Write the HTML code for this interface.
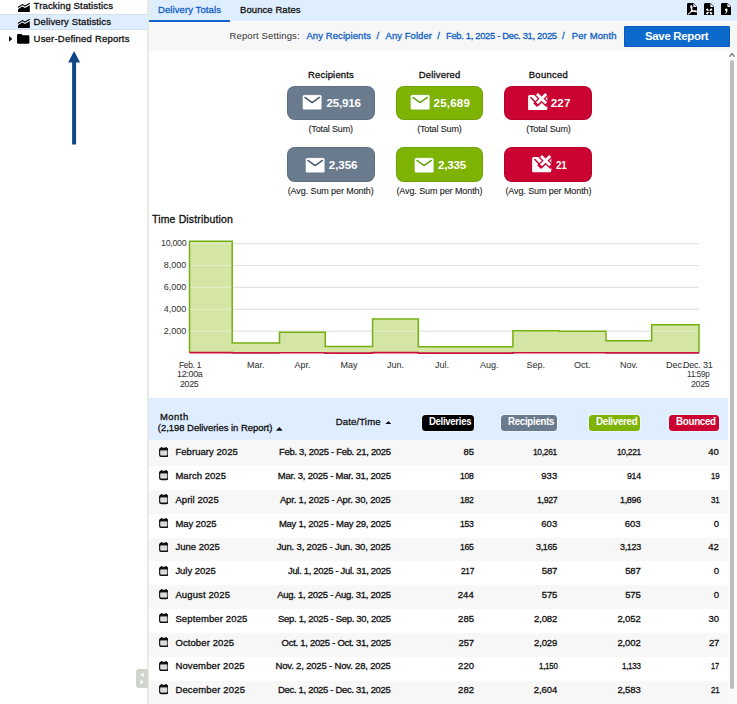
<!DOCTYPE html>
<html lang="en"><head><meta charset="utf-8"><title>Delivery Statistics</title>
<style>
html,body{margin:0;padding:0;background:#fff;}
body{width:737px;height:704px;position:relative;overflow:hidden;font-family:"Liberation Sans", sans-serif;}
.abs{position:absolute;display:block;}
.t{position:absolute;white-space:pre;font-family:"Liberation Sans", sans-serif;}
</style></head><body>

<div class="abs" style="left:0;top:0;width:148px;height:704px;background:#fff"></div>
<div class="abs" style="left:147.1px;top:0;width:1.5px;height:704px;background:#e9e9e5"></div>
<div class="abs" style="left:0;top:13.8px;width:147.5px;height:16.5px;background:#dfeeff;border-top:1px solid #d6e0ec;border-bottom:1px solid #d6e0ec;box-sizing:border-box"></div>
<svg class="abs" style="left:17.8px;top:3px" width="11.8" height="9" viewBox="0 0 11.8 9"><path d="M0 9 V6.2 L4.2 3.6 L7 5 L11.8 2.2 V9 Z" fill="#000"/><path d="M0.3 4.2 L4.2 1.6 L7 3 L11.4 0.5" fill="none" stroke="#000" stroke-width="1.1" stroke-linecap="round" stroke-linejoin="round"/></svg><svg class="abs" style="left:17.8px;top:19.3px" width="11.8" height="9" viewBox="0 0 11.8 9"><path d="M0 9 V6.2 L4.2 3.6 L7 5 L11.8 2.2 V9 Z" fill="#000"/><path d="M0.3 4.2 L4.2 1.6 L7 3 L11.4 0.5" fill="none" stroke="#000" stroke-width="1.1" stroke-linecap="round" stroke-linejoin="round"/></svg>
<svg class="abs" style="left:17.4px;top:34px" width="12.4" height="9.8" viewBox="0 0 12.4 9.8"><path d="M1.2 0 H4.4 L5.8 1.3 H11.2 Q12.4 1.3 12.4 2.5 V8.6 Q12.4 9.8 11.2 9.8 H1.2 Q0 9.8 0 8.6 V1.2 Q0 0 1.2 0 Z" fill="#000"/></svg>
<svg class="abs" style="left:8.6px;top:36.1px" width="3.4" height="5.8" viewBox="0 0 3.4 5.8"><path d="M0 0 L3.4 2.9 L0 5.8 Z" fill="#111"/></svg>
<svg class="abs" style="left:66px;top:49px" width="16" height="97" viewBox="0 0 16 97"><path d="M8.1 2 L14.1 13.6 H10.1 V95.4 H6.1 V13.6 H2.1 Z" fill="#0d4685"/></svg>
<div class="abs" style="left:148.6px;top:0;width:588.4px;height:21.4px;background:#dfeeff"></div>
<div class="abs" style="left:148.6px;top:19.6px;width:81.8px;height:2px;background:#1565c8"></div>
<div class="abs" style="left:148.6px;top:21.5px;width:588.4px;height:29px;background:#f7f7f7"></div>
<svg class="abs" style="left:686.9px;top:2.7px" width="10.4" height="12.6" viewBox="0 0 10.4 12.6"><path d="M1.4 0 H6.4 L10.4 4 V11.2 Q10.4 12.6 9 12.6 H1.4 Q0 12.6 0 11.2 V1.4 Q0 0 1.4 0 Z" fill="#000"/><path d="M6.3 0.5 V3.3 Q6.3 4.1 7.1 4.1 H9.9 Z" fill="#eef3fb"/><path d="M1.4 11 C3.6 9.6 5.2 6.4 4.9 3.4 C4.7 2.2 3.5 2.5 3.7 3.8 C4.2 6.4 6.4 8.7 9.2 8.8 C10 8.2 8.8 7.5 7.4 7.7 C5 8.1 2.8 9.2 1.4 11 Z" fill="none" stroke="#fff" stroke-width="1.05" stroke-linejoin="round"/></svg><svg class="abs" style="left:703.7px;top:2.7px" width="10.4" height="12.6" viewBox="0 0 10.4 12.6"><path d="M1.4 0 H6.4 L10.4 4 V11.2 Q10.4 12.6 9 12.6 H1.4 Q0 12.6 0 11.2 V1.4 Q0 0 1.4 0 Z" fill="#000"/><path d="M6.3 0.5 V3.3 Q6.3 4.1 7.1 4.1 H9.9 Z" fill="#eef3fb"/><path d="M2.5 5.9 L7.9 11 M7.9 5.9 L2.5 11" stroke="#fff" stroke-width="1.9" fill="none"/><path d="M1.6 8.45 H8.8 M5.2 5 V11.8" stroke="#000" stroke-width="0.9"/></svg><svg class="abs" style="left:720.7px;top:2.7px" width="10.4" height="12.6" viewBox="0 0 10.4 12.6"><path d="M1.4 0 H6.4 L10.4 4 V11.2 Q10.4 12.6 9 12.6 H1.4 Q0 12.6 0 11.2 V1.4 Q0 0 1.4 0 Z" fill="#000"/><path d="M6.3 0.5 V3.3 Q6.3 4.1 7.1 4.1 H9.9 Z" fill="#eef3fb"/><path d="M4 6.8 a1.3 1.3 0 1 1 2.6 0 Q6.8 9.6 4.2 11 L3.9 10.5 Q5.2 9.6 5.2 8.1 Q4 8 4 6.8 Z" fill="#fff"/></svg>
<div class="abs" style="left:623.6px;top:26.4px;width:106.1px;height:20.2px;border-radius:1.5px;background:#0d6acd;box-shadow:inset 0 0 0 1px #0b58c3"></div>
<div class="abs" style="left:728.4px;top:50.5px;width:8.6px;height:653.5px;background:#fafafa"></div>
<div class="abs" style="left:730.1px;top:60.1px;width:4.4px;height:629px;border-radius:2.2px;background:#bdbdbd"></div>
<svg class="abs" style="left:729.4px;top:52.4px" width="6" height="5" viewBox="0 0 6 5"><path d="M0.9 4.2 L3 1.5 L5.1 4.2" fill="none" stroke="#858585" stroke-width="1.4" stroke-linecap="round" stroke-linejoin="round"/></svg>
<div class="abs" style="left:287.2px;top:85.5px;width:87.6px;height:34.5px;border-radius:8px;background:#6a7b8e;box-shadow:inset 0 0 0 0.8px rgba(0,0,30,0.13)"></div><div class="abs" style="left:287.2px;top:147.3px;width:87.6px;height:34.5px;border-radius:8px;background:#6a7b8e;box-shadow:inset 0 0 0 0.8px rgba(0,0,30,0.13)"></div><div class="abs" style="left:395.7px;top:85.5px;width:87.6px;height:34.5px;border-radius:8px;background:#7eb304;box-shadow:inset 0 0 0 0.8px rgba(0,0,30,0.13)"></div><div class="abs" style="left:395.7px;top:147.3px;width:87.6px;height:34.5px;border-radius:8px;background:#7eb304;box-shadow:inset 0 0 0 0.8px rgba(0,0,30,0.13)"></div><div class="abs" style="left:504.4px;top:85.5px;width:87.6px;height:34.5px;border-radius:8px;background:#cb0332;box-shadow:inset 0 0 0 0.8px rgba(0,0,30,0.13)"></div><div class="abs" style="left:504.4px;top:147.3px;width:87.6px;height:34.5px;border-radius:8px;background:#cb0332;box-shadow:inset 0 0 0 0.8px rgba(0,0,30,0.13)"></div>
<div class="abs" style="left:148.6px;top:398.2px;width:579.4px;height:42.2px;background:#dfeeff"></div>
<div class="abs" style="left:148.6px;top:440.00px;width:579.4px;height:26.30px;background:#f7f7f7"></div><div class="abs" style="left:148.6px;top:466.20px;width:579.4px;height:23.92px;background:#ffffff"></div><div class="abs" style="left:148.6px;top:490.02px;width:579.4px;height:23.92px;background:#f7f7f7"></div><div class="abs" style="left:148.6px;top:513.84px;width:579.4px;height:23.92px;background:#ffffff"></div><div class="abs" style="left:148.6px;top:537.66px;width:579.4px;height:23.92px;background:#f7f7f7"></div><div class="abs" style="left:148.6px;top:561.48px;width:579.4px;height:23.92px;background:#ffffff"></div><div class="abs" style="left:148.6px;top:585.30px;width:579.4px;height:23.92px;background:#f7f7f7"></div><div class="abs" style="left:148.6px;top:609.12px;width:579.4px;height:23.92px;background:#ffffff"></div><div class="abs" style="left:148.6px;top:632.94px;width:579.4px;height:23.92px;background:#f7f7f7"></div><div class="abs" style="left:148.6px;top:656.76px;width:579.4px;height:23.92px;background:#ffffff"></div><div class="abs" style="left:148.6px;top:680.58px;width:579.4px;height:23.92px;background:#f7f7f7"></div>
<div class="abs" style="left:148.6px;top:440.2px;width:579.4px;height:1.1px;background:#fbf8f8"></div>
<div class="abs" style="left:421.7px;top:415.2px;width:52.4px;height:15.4px;border-radius:3.5px;background:#000;box-shadow:0 0 0 0.8px rgba(255,255,255,0.55)"></div><div class="abs" style="left:501px;top:415.2px;width:56.4px;height:15.4px;border-radius:3.5px;background:#6a7b8e;box-shadow:0 0 0 0.8px rgba(255,255,255,0.55)"></div><div class="abs" style="left:588.9px;top:415.2px;width:51.6px;height:15.4px;border-radius:3.5px;background:#7eb304;box-shadow:0 0 0 0.8px rgba(255,255,255,0.55)"></div><div class="abs" style="left:668.6px;top:415.2px;width:50.0px;height:15.4px;border-radius:3.5px;background:#cb0332;box-shadow:0 0 0 0.8px rgba(255,255,255,0.55)"></div>
<svg class="abs" style="left:276.3px;top:427.1px" width="6.6" height="3.8" viewBox="0 0 6.6 3.8"><path d="M0.6 3.2 L3.3 0.6 L6 3.2 Z" fill="#111" stroke="#111" stroke-width="0.9" stroke-linejoin="round"/></svg>
<svg class="abs" style="left:385.4px;top:420.7px" width="6.6" height="3.8" viewBox="0 0 6.6 3.8"><path d="M0.6 3.2 L3.3 0.6 L6 3.2 Z" fill="#111" stroke="#111" stroke-width="0.9" stroke-linejoin="round"/></svg>
<div class="abs" style="left:135.6px;top:669px;width:12.2px;height:18.6px;border-radius:3px 0 0 3px;background:#d0d4cc"></div>
<svg class="abs" style="left:139.6px;top:671.6px" width="4" height="13" viewBox="0 0 4 13"><path d="M3.6 0.4 V5.2 L0.4 2.8 Z M0.4 7.6 V12.4 L3.6 10 Z" fill="#fff"/></svg>
<svg class="abs" style="left:0;top:0" width="737" height="704" viewBox="0 0 737 704">
<defs><clipPath id="fc"><path d="M189.50 353.10 L189.50 241.18 L232.21 241.18 L232.21 343.09 L279.50 343.09 L279.50 332.34 L325.26 332.34 L325.26 346.50 L372.55 346.50 L372.55 318.90 L418.32 318.90 L418.32 346.67 L465.61 346.67 L465.61 346.80 L512.90 346.80 L512.90 330.63 L558.66 330.63 L558.66 331.18 L605.95 331.18 L605.95 340.69 L651.71 340.69 L651.71 324.82 L699.00 324.82 L699.00 353.10 Z"/></clipPath></defs>
<line x1="189.5" x2="699.0" y1="331.20" y2="331.20" stroke="#e3e3e3" stroke-width="1.2"/><line x1="189.5" x2="699.0" y1="309.30" y2="309.30" stroke="#e3e3e3" stroke-width="1.2"/><line x1="189.5" x2="699.0" y1="287.40" y2="287.40" stroke="#e3e3e3" stroke-width="1.2"/><line x1="189.5" x2="699.0" y1="265.50" y2="265.50" stroke="#e3e3e3" stroke-width="1.2"/><line x1="189.5" x2="699.0" y1="243.60" y2="243.60" stroke="#e3e3e3" stroke-width="1.2"/>
<path d="M189.50 353.10 L189.50 241.18 L232.21 241.18 L232.21 343.09 L279.50 343.09 L279.50 332.34 L325.26 332.34 L325.26 346.50 L372.55 346.50 L372.55 318.90 L418.32 318.90 L418.32 346.67 L465.61 346.67 L465.61 346.80 L512.90 346.80 L512.90 330.63 L558.66 330.63 L558.66 331.18 L605.95 331.18 L605.95 340.69 L651.71 340.69 L651.71 324.82 L699.00 324.82 L699.00 353.10 Z" fill="#d4e5a6" stroke="none"/>
<g clip-path="url(#fc)"><line x1="189.5" x2="699.0" y1="331.20" y2="331.20" stroke="#e1eec4" stroke-width="1.2"/><line x1="189.5" x2="699.0" y1="309.30" y2="309.30" stroke="#e1eec4" stroke-width="1.2"/><line x1="189.5" x2="699.0" y1="287.40" y2="287.40" stroke="#e1eec4" stroke-width="1.2"/><line x1="189.5" x2="699.0" y1="265.50" y2="265.50" stroke="#e1eec4" stroke-width="1.2"/><line x1="189.5" x2="699.0" y1="243.60" y2="243.60" stroke="#e1eec4" stroke-width="1.2"/></g>
<path d="M189.50 353.10 L189.50 241.18 L189.50 241.18 L232.21 241.18 L232.21 343.09 L279.50 343.09 L279.50 332.34 L325.26 332.34 L325.26 346.50 L372.55 346.50 L372.55 318.90 L418.32 318.90 L418.32 346.67 L465.61 346.67 L465.61 346.80 L512.90 346.80 L512.90 330.63 L558.66 330.63 L558.66 331.18 L605.95 331.18 L605.95 340.69 L651.71 340.69 L651.71 324.82 L699.00 324.82 L699.00 353.10" fill="none" stroke="#74b010" stroke-width="1.5" stroke-linejoin="miter"/>
<path d="M189.50 352.66 L189.50 352.66 L232.21 352.66 L232.21 352.89 L279.50 352.89 L279.50 352.76 L325.26 352.76 L325.26 353.10 L372.55 353.10 L372.55 352.64 L418.32 352.64 L418.32 353.10 L465.61 353.10 L465.61 353.10 L512.90 353.10 L512.90 352.77 L558.66 352.77 L558.66 352.80 L605.95 352.80 L605.95 352.91 L651.71 352.91 L651.71 352.87 L699.00 352.87" fill="none" stroke="#c9123c" stroke-width="1.6"/>
</svg>
<svg class="abs" style="left:302.3px;top:94.4px" width="20.3" height="16.5" viewBox="-0.5 -0.5 21 16.6"><rect x="0" y="0" width="20" height="15.6" rx="1.7" fill="#fff" stroke="#44556a" stroke-opacity="0.45" stroke-width="0.8"/><path d="M2.5 2.8 L10 8.1 L17.5 2.8" fill="none" stroke="#44556a" stroke-width="1.5" stroke-linecap="round" stroke-linejoin="round"/></svg><svg class="abs" style="left:304.8px;top:156.7px" width="20.3" height="16.5" viewBox="-0.5 -0.5 21 16.6"><rect x="0" y="0" width="20" height="15.6" rx="1.7" fill="#fff" stroke="#44556a" stroke-opacity="0.45" stroke-width="0.8"/><path d="M2.5 2.8 L10 8.1 L17.5 2.8" fill="none" stroke="#44556a" stroke-width="1.5" stroke-linecap="round" stroke-linejoin="round"/></svg><svg class="abs" style="left:409.9px;top:94.4px" width="20.3" height="16.5" viewBox="-0.5 -0.5 21 16.6"><rect x="0" y="0" width="20" height="15.6" rx="1.7" fill="#fff" stroke="#63a30a" stroke-opacity="0.45" stroke-width="0.8"/><path d="M2.5 2.8 L10 8.1 L17.5 2.8" fill="none" stroke="#63a30a" stroke-width="1.5" stroke-linecap="round" stroke-linejoin="round"/></svg><svg class="abs" style="left:413.7px;top:156.7px" width="20.3" height="16.5" viewBox="-0.5 -0.5 21 16.6"><rect x="0" y="0" width="20" height="15.6" rx="1.7" fill="#fff" stroke="#63a30a" stroke-opacity="0.45" stroke-width="0.8"/><path d="M2.5 2.8 L10 8.1 L17.5 2.8" fill="none" stroke="#63a30a" stroke-width="1.5" stroke-linecap="round" stroke-linejoin="round"/></svg><svg class="abs" style="left:527.6px;top:92.9px" width="20" height="17.4" viewBox="0 0 20 17.4"><rect x="0.1" y="2.1" width="19.2" height="15.2" rx="1.6" fill="#fff"/><path d="M2.9 4.6 L9.9 12.1 L12.6 9.6" fill="none" stroke="#cb0332" stroke-width="1.5" stroke-linecap="round" stroke-linejoin="round"/><path d="M9 1.1 L18.2 10.3 M18.2 1.1 L9 10.3" fill="none" stroke="#cb0332" stroke-width="5.4" stroke-linecap="square"/><path d="M9 1.1 L18.2 10.3 M18.2 1.1 L9 10.3" fill="none" stroke="#fff" stroke-width="2.9" stroke-linecap="butt"/></svg><svg class="abs" style="left:532px;top:155.2px" width="20" height="17.4" viewBox="0 0 20 17.4"><rect x="0.1" y="2.1" width="19.2" height="15.2" rx="1.6" fill="#fff"/><path d="M2.9 4.6 L9.9 12.1 L12.6 9.6" fill="none" stroke="#cb0332" stroke-width="1.5" stroke-linecap="round" stroke-linejoin="round"/><path d="M9 1.1 L18.2 10.3 M18.2 1.1 L9 10.3" fill="none" stroke="#cb0332" stroke-width="5.4" stroke-linecap="square"/><path d="M9 1.1 L18.2 10.3 M18.2 1.1 L9 10.3" fill="none" stroke="#fff" stroke-width="2.9" stroke-linecap="butt"/></svg><svg class="abs" style="left:158.8px;top:446.70px" width="9.6" height="10.4" viewBox="0 0 9.6 10.4"><rect x="0.7" y="1.5" width="8.2" height="8" rx="1.7" fill="#fff" stroke="#111" stroke-width="1.3"/><path d="M0.1 3.2 Q0.1 0.9 2.4 0.9 H7.2 Q9.5 0.9 9.5 3.2 V3.6 H0.1 Z" fill="#111"/><rect x="1.7" y="0" width="1.5" height="2" rx="0.6" fill="#111"/><rect x="6.4" y="0" width="1.5" height="2" rx="0.6" fill="#111"/><rect x="1.6" y="4.2" width="6.4" height="3.4" fill="#c4c4c4"/><path d="M1.4 5.9 H8.2 M3.7 4 V7.8 M5.9 4 V7.8" stroke="#f4f4f4" stroke-width="0.6" fill="none"/><path d="M1.2 9.2 H8.4" stroke="#111" stroke-width="1.1" fill="none"/></svg><svg class="abs" style="left:158.8px;top:470.47px" width="9.6" height="10.4" viewBox="0 0 9.6 10.4"><rect x="0.7" y="1.5" width="8.2" height="8" rx="1.7" fill="#fff" stroke="#111" stroke-width="1.3"/><path d="M0.1 3.2 Q0.1 0.9 2.4 0.9 H7.2 Q9.5 0.9 9.5 3.2 V3.6 H0.1 Z" fill="#111"/><rect x="1.7" y="0" width="1.5" height="2" rx="0.6" fill="#111"/><rect x="6.4" y="0" width="1.5" height="2" rx="0.6" fill="#111"/><rect x="1.6" y="4.2" width="6.4" height="3.4" fill="#c4c4c4"/><path d="M1.4 5.9 H8.2 M3.7 4 V7.8 M5.9 4 V7.8" stroke="#f4f4f4" stroke-width="0.6" fill="none"/><path d="M1.2 9.2 H8.4" stroke="#111" stroke-width="1.1" fill="none"/></svg><svg class="abs" style="left:158.8px;top:494.24px" width="9.6" height="10.4" viewBox="0 0 9.6 10.4"><rect x="0.7" y="1.5" width="8.2" height="8" rx="1.7" fill="#fff" stroke="#111" stroke-width="1.3"/><path d="M0.1 3.2 Q0.1 0.9 2.4 0.9 H7.2 Q9.5 0.9 9.5 3.2 V3.6 H0.1 Z" fill="#111"/><rect x="1.7" y="0" width="1.5" height="2" rx="0.6" fill="#111"/><rect x="6.4" y="0" width="1.5" height="2" rx="0.6" fill="#111"/><rect x="1.6" y="4.2" width="6.4" height="3.4" fill="#c4c4c4"/><path d="M1.4 5.9 H8.2 M3.7 4 V7.8 M5.9 4 V7.8" stroke="#f4f4f4" stroke-width="0.6" fill="none"/><path d="M1.2 9.2 H8.4" stroke="#111" stroke-width="1.1" fill="none"/></svg><svg class="abs" style="left:158.8px;top:518.01px" width="9.6" height="10.4" viewBox="0 0 9.6 10.4"><rect x="0.7" y="1.5" width="8.2" height="8" rx="1.7" fill="#fff" stroke="#111" stroke-width="1.3"/><path d="M0.1 3.2 Q0.1 0.9 2.4 0.9 H7.2 Q9.5 0.9 9.5 3.2 V3.6 H0.1 Z" fill="#111"/><rect x="1.7" y="0" width="1.5" height="2" rx="0.6" fill="#111"/><rect x="6.4" y="0" width="1.5" height="2" rx="0.6" fill="#111"/><rect x="1.6" y="4.2" width="6.4" height="3.4" fill="#c4c4c4"/><path d="M1.4 5.9 H8.2 M3.7 4 V7.8 M5.9 4 V7.8" stroke="#f4f4f4" stroke-width="0.6" fill="none"/><path d="M1.2 9.2 H8.4" stroke="#111" stroke-width="1.1" fill="none"/></svg><svg class="abs" style="left:158.8px;top:541.78px" width="9.6" height="10.4" viewBox="0 0 9.6 10.4"><rect x="0.7" y="1.5" width="8.2" height="8" rx="1.7" fill="#fff" stroke="#111" stroke-width="1.3"/><path d="M0.1 3.2 Q0.1 0.9 2.4 0.9 H7.2 Q9.5 0.9 9.5 3.2 V3.6 H0.1 Z" fill="#111"/><rect x="1.7" y="0" width="1.5" height="2" rx="0.6" fill="#111"/><rect x="6.4" y="0" width="1.5" height="2" rx="0.6" fill="#111"/><rect x="1.6" y="4.2" width="6.4" height="3.4" fill="#c4c4c4"/><path d="M1.4 5.9 H8.2 M3.7 4 V7.8 M5.9 4 V7.8" stroke="#f4f4f4" stroke-width="0.6" fill="none"/><path d="M1.2 9.2 H8.4" stroke="#111" stroke-width="1.1" fill="none"/></svg><svg class="abs" style="left:158.8px;top:565.55px" width="9.6" height="10.4" viewBox="0 0 9.6 10.4"><rect x="0.7" y="1.5" width="8.2" height="8" rx="1.7" fill="#fff" stroke="#111" stroke-width="1.3"/><path d="M0.1 3.2 Q0.1 0.9 2.4 0.9 H7.2 Q9.5 0.9 9.5 3.2 V3.6 H0.1 Z" fill="#111"/><rect x="1.7" y="0" width="1.5" height="2" rx="0.6" fill="#111"/><rect x="6.4" y="0" width="1.5" height="2" rx="0.6" fill="#111"/><rect x="1.6" y="4.2" width="6.4" height="3.4" fill="#c4c4c4"/><path d="M1.4 5.9 H8.2 M3.7 4 V7.8 M5.9 4 V7.8" stroke="#f4f4f4" stroke-width="0.6" fill="none"/><path d="M1.2 9.2 H8.4" stroke="#111" stroke-width="1.1" fill="none"/></svg><svg class="abs" style="left:158.8px;top:589.32px" width="9.6" height="10.4" viewBox="0 0 9.6 10.4"><rect x="0.7" y="1.5" width="8.2" height="8" rx="1.7" fill="#fff" stroke="#111" stroke-width="1.3"/><path d="M0.1 3.2 Q0.1 0.9 2.4 0.9 H7.2 Q9.5 0.9 9.5 3.2 V3.6 H0.1 Z" fill="#111"/><rect x="1.7" y="0" width="1.5" height="2" rx="0.6" fill="#111"/><rect x="6.4" y="0" width="1.5" height="2" rx="0.6" fill="#111"/><rect x="1.6" y="4.2" width="6.4" height="3.4" fill="#c4c4c4"/><path d="M1.4 5.9 H8.2 M3.7 4 V7.8 M5.9 4 V7.8" stroke="#f4f4f4" stroke-width="0.6" fill="none"/><path d="M1.2 9.2 H8.4" stroke="#111" stroke-width="1.1" fill="none"/></svg><svg class="abs" style="left:158.8px;top:613.09px" width="9.6" height="10.4" viewBox="0 0 9.6 10.4"><rect x="0.7" y="1.5" width="8.2" height="8" rx="1.7" fill="#fff" stroke="#111" stroke-width="1.3"/><path d="M0.1 3.2 Q0.1 0.9 2.4 0.9 H7.2 Q9.5 0.9 9.5 3.2 V3.6 H0.1 Z" fill="#111"/><rect x="1.7" y="0" width="1.5" height="2" rx="0.6" fill="#111"/><rect x="6.4" y="0" width="1.5" height="2" rx="0.6" fill="#111"/><rect x="1.6" y="4.2" width="6.4" height="3.4" fill="#c4c4c4"/><path d="M1.4 5.9 H8.2 M3.7 4 V7.8 M5.9 4 V7.8" stroke="#f4f4f4" stroke-width="0.6" fill="none"/><path d="M1.2 9.2 H8.4" stroke="#111" stroke-width="1.1" fill="none"/></svg><svg class="abs" style="left:158.8px;top:636.86px" width="9.6" height="10.4" viewBox="0 0 9.6 10.4"><rect x="0.7" y="1.5" width="8.2" height="8" rx="1.7" fill="#fff" stroke="#111" stroke-width="1.3"/><path d="M0.1 3.2 Q0.1 0.9 2.4 0.9 H7.2 Q9.5 0.9 9.5 3.2 V3.6 H0.1 Z" fill="#111"/><rect x="1.7" y="0" width="1.5" height="2" rx="0.6" fill="#111"/><rect x="6.4" y="0" width="1.5" height="2" rx="0.6" fill="#111"/><rect x="1.6" y="4.2" width="6.4" height="3.4" fill="#c4c4c4"/><path d="M1.4 5.9 H8.2 M3.7 4 V7.8 M5.9 4 V7.8" stroke="#f4f4f4" stroke-width="0.6" fill="none"/><path d="M1.2 9.2 H8.4" stroke="#111" stroke-width="1.1" fill="none"/></svg><svg class="abs" style="left:158.8px;top:660.63px" width="9.6" height="10.4" viewBox="0 0 9.6 10.4"><rect x="0.7" y="1.5" width="8.2" height="8" rx="1.7" fill="#fff" stroke="#111" stroke-width="1.3"/><path d="M0.1 3.2 Q0.1 0.9 2.4 0.9 H7.2 Q9.5 0.9 9.5 3.2 V3.6 H0.1 Z" fill="#111"/><rect x="1.7" y="0" width="1.5" height="2" rx="0.6" fill="#111"/><rect x="6.4" y="0" width="1.5" height="2" rx="0.6" fill="#111"/><rect x="1.6" y="4.2" width="6.4" height="3.4" fill="#c4c4c4"/><path d="M1.4 5.9 H8.2 M3.7 4 V7.8 M5.9 4 V7.8" stroke="#f4f4f4" stroke-width="0.6" fill="none"/><path d="M1.2 9.2 H8.4" stroke="#111" stroke-width="1.1" fill="none"/></svg><svg class="abs" style="left:158.8px;top:684.40px" width="9.6" height="10.4" viewBox="0 0 9.6 10.4"><rect x="0.7" y="1.5" width="8.2" height="8" rx="1.7" fill="#fff" stroke="#111" stroke-width="1.3"/><path d="M0.1 3.2 Q0.1 0.9 2.4 0.9 H7.2 Q9.5 0.9 9.5 3.2 V3.6 H0.1 Z" fill="#111"/><rect x="1.7" y="0" width="1.5" height="2" rx="0.6" fill="#111"/><rect x="6.4" y="0" width="1.5" height="2" rx="0.6" fill="#111"/><rect x="1.6" y="4.2" width="6.4" height="3.4" fill="#c4c4c4"/><path d="M1.4 5.9 H8.2 M3.7 4 V7.8 M5.9 4 V7.8" stroke="#f4f4f4" stroke-width="0.6" fill="none"/><path d="M1.2 9.2 H8.4" stroke="#111" stroke-width="1.1" fill="none"/></svg>
<span class="t" style="left:33.60px;top:-1.05px;font-size:9.5px;line-height:13.3px;letter-spacing:0.146px;color:#111;-webkit-text-stroke:0.3px #111;">Tracking Statistics</span><span class="t" style="left:33.60px;top:15.45px;font-size:9.5px;line-height:13.3px;letter-spacing:0.133px;color:#111;-webkit-text-stroke:0.3px #111;">Delivery Statistics</span><span class="t" style="left:33.60px;top:32.05px;font-size:9.5px;line-height:13.3px;letter-spacing:0.206px;color:#111;-webkit-text-stroke:0.3px #111;">User-Defined Reports</span><span class="t" style="left:158.00px;top:2.95px;font-size:9.5px;line-height:13.3px;letter-spacing:0.093px;color:#0f60c4;-webkit-text-stroke:0.3px #0f60c4;">Delivery Totals</span><span class="t" style="left:240.00px;top:2.95px;font-size:9.5px;line-height:13.3px;letter-spacing:0.076px;color:#111;-webkit-text-stroke:0.3px #111;">Bounce Rates</span><span class="t" style="left:229.50px;top:28.85px;font-size:9.5px;line-height:13.3px;letter-spacing:0.130px;color:#333;">Report Settings:</span><span class="t" style="left:306.40px;top:28.85px;font-size:9.5px;line-height:13.3px;letter-spacing:0.087px;color:#0f60c4;-webkit-text-stroke:0.3px #0f60c4;">Any Recipients</span><span class="t" style="left:376.60px;top:28.85px;font-size:9.5px;line-height:13.3px;letter-spacing:0.959px;color:#0f60c4;-webkit-text-stroke:0.3px #0f60c4;">/</span><span class="t" style="left:385.50px;top:28.85px;font-size:9.5px;line-height:13.3px;letter-spacing:0.056px;color:#0f60c4;-webkit-text-stroke:0.3px #0f60c4;">Any Folder</span><span class="t" style="left:437.30px;top:28.85px;font-size:9.5px;line-height:13.3px;letter-spacing:0.959px;color:#0f60c4;-webkit-text-stroke:0.3px #0f60c4;">/</span><span class="t" style="left:446.30px;top:28.85px;font-size:9.5px;line-height:13.3px;letter-spacing:-0.300px;color:#0f60c4;-webkit-text-stroke:0.3px #0f60c4;transform:scaleX(0.9835);transform-origin:0 50%;">Feb. 1, 2025 - Dec. 31, 2025</span><span class="t" style="left:562.00px;top:28.85px;font-size:9.5px;line-height:13.3px;letter-spacing:0.959px;color:#0f60c4;-webkit-text-stroke:0.3px #0f60c4;">/</span><span class="t" style="left:571.70px;top:28.85px;font-size:9.5px;line-height:13.3px;letter-spacing:0.130px;color:#0f60c4;-webkit-text-stroke:0.3px #0f60c4;">Per Month</span><span class="t" style="left:645.00px;top:28.48px;font-size:11.6px;line-height:16.24px;letter-spacing:-0.300px;color:#fff;font-weight:700;transform:scaleX(0.9836);transform-origin:0 50%;">Save Report</span><span class="t" style="left:308.00px;top:67.85px;font-size:9.5px;line-height:13.3px;letter-spacing:0.164px;color:#111;-webkit-text-stroke:0.3px #111;">Recipients</span><span class="t" style="left:418.70px;top:67.85px;font-size:9.5px;line-height:13.3px;letter-spacing:0.184px;color:#111;-webkit-text-stroke:0.3px #111;">Delivered</span><span class="t" style="left:528.80px;top:67.85px;font-size:9.5px;line-height:13.3px;letter-spacing:0.241px;color:#111;-webkit-text-stroke:0.3px #111;">Bounced</span><span class="t" style="left:308.45px;top:123.20px;font-size:9px;line-height:12.6px;letter-spacing:-0.138px;color:#222;-webkit-text-stroke:0.1px #222;">(Total Sum)</span><span class="t" style="left:287.70px;top:185.00px;font-size:9px;line-height:12.6px;letter-spacing:-0.094px;color:#222;-webkit-text-stroke:0.1px #222;">(Avg. Sum per Month)</span><span class="t" style="left:417.15px;top:123.20px;font-size:9px;line-height:12.6px;letter-spacing:-0.138px;color:#222;-webkit-text-stroke:0.1px #222;">(Total Sum)</span><span class="t" style="left:396.40px;top:185.00px;font-size:9px;line-height:12.6px;letter-spacing:-0.094px;color:#222;-webkit-text-stroke:0.1px #222;">(Avg. Sum per Month)</span><span class="t" style="left:526.15px;top:123.20px;font-size:9px;line-height:12.6px;letter-spacing:-0.138px;color:#222;-webkit-text-stroke:0.1px #222;">(Total Sum)</span><span class="t" style="left:505.40px;top:185.00px;font-size:9px;line-height:12.6px;letter-spacing:-0.094px;color:#222;-webkit-text-stroke:0.1px #222;">(Avg. Sum per Month)</span><span class="t" style="left:326.40px;top:94.98px;font-size:11.6px;line-height:16.24px;letter-spacing:-0.178px;color:#fff;font-weight:700;">25,916</span><span class="t" style="left:328.80px;top:156.98px;font-size:11.6px;line-height:16.24px;letter-spacing:-0.063px;color:#fff;font-weight:700;">2,356</span><span class="t" style="left:433.60px;top:94.98px;font-size:11.6px;line-height:16.24px;letter-spacing:0.155px;color:#fff;font-weight:700;">25,689</span><span class="t" style="left:438.00px;top:156.98px;font-size:11.6px;line-height:16.24px;letter-spacing:-0.203px;color:#fff;font-weight:700;">2,335</span><span class="t" style="left:550.70px;top:94.98px;font-size:11.6px;line-height:16.24px;letter-spacing:0.185px;color:#fff;font-weight:700;">227</span><span class="t" style="left:555.70px;top:156.98px;font-size:11.6px;line-height:16.24px;letter-spacing:-0.300px;color:#fff;font-weight:700;transform:scaleX(0.8532);transform-origin:0 50%;">21</span><span class="t" style="left:152.00px;top:212.05px;font-size:10.5px;line-height:14.7px;letter-spacing:0.153px;color:#111;-webkit-text-stroke:0.3px #111;">Time Distribution</span><span class="t" style="left:163.80px;top:324.60px;font-size:9px;line-height:12.6px;letter-spacing:0.014px;color:#333;">2,000</span><span class="t" style="left:163.80px;top:302.70px;font-size:9px;line-height:12.6px;letter-spacing:0.014px;color:#333;">4,000</span><span class="t" style="left:163.80px;top:280.80px;font-size:9px;line-height:12.6px;letter-spacing:0.014px;color:#333;">6,000</span><span class="t" style="left:163.80px;top:258.90px;font-size:9px;line-height:12.6px;letter-spacing:0.014px;color:#333;">8,000</span><span class="t" style="left:161.10px;top:237.00px;font-size:9px;line-height:12.6px;letter-spacing:-0.300px;color:#333;transform:scaleX(0.9832);transform-origin:0 50%;">10,000</span><span class="t" style="left:247.10px;top:358.50px;font-size:9px;line-height:12.6px;letter-spacing:0.000px;color:#333;-webkit-text-stroke:0.05px #333;">Mar.</span><span class="t" style="left:294.38px;top:358.50px;font-size:9px;line-height:12.6px;letter-spacing:0.000px;color:#333;-webkit-text-stroke:0.05px #333;">Apr.</span><span class="t" style="left:340.40px;top:358.50px;font-size:9px;line-height:12.6px;letter-spacing:0.000px;color:#333;-webkit-text-stroke:0.05px #333;">May</span><span class="t" style="left:386.93px;top:358.50px;font-size:9px;line-height:12.6px;letter-spacing:0.000px;color:#333;-webkit-text-stroke:0.05px #333;">Jun.</span><span class="t" style="left:434.95px;top:358.50px;font-size:9px;line-height:12.6px;letter-spacing:0.000px;color:#333;-webkit-text-stroke:0.05px #333;">Jul.</span><span class="t" style="left:479.99px;top:358.50px;font-size:9px;line-height:12.6px;letter-spacing:0.000px;color:#333;-webkit-text-stroke:0.05px #333;">Aug.</span><span class="t" style="left:526.52px;top:358.50px;font-size:9px;line-height:12.6px;letter-spacing:0.000px;color:#333;-webkit-text-stroke:0.05px #333;">Sep.</span><span class="t" style="left:574.05px;top:358.50px;font-size:9px;line-height:12.6px;letter-spacing:0.000px;color:#333;-webkit-text-stroke:0.05px #333;">Oct.</span><span class="t" style="left:619.91px;top:358.50px;font-size:9px;line-height:12.6px;letter-spacing:0.000px;color:#333;-webkit-text-stroke:0.05px #333;">Nov.</span><span class="t" style="left:666.10px;top:358.50px;font-size:9px;line-height:12.6px;letter-spacing:0.000px;color:#333;-webkit-text-stroke:0.05px #333;">Dec.</span><span class="t" style="left:178.50px;top:358.50px;font-size:9px;line-height:12.6px;letter-spacing:-0.300px;color:#333;-webkit-text-stroke:0.05px #333;transform:scaleX(0.9277);transform-origin:0 50%;">Feb. 1</span><span class="t" style="left:176.75px;top:368.10px;font-size:9px;line-height:12.6px;letter-spacing:-0.300px;color:#333;-webkit-text-stroke:0.05px #333;transform:scaleX(0.9910);transform-origin:0 50%;">12:00a</span><span class="t" style="left:180.25px;top:377.50px;font-size:9px;line-height:12.6px;letter-spacing:-0.300px;color:#333;-webkit-text-stroke:0.05px #333;transform:scaleX(0.9824);transform-origin:0 50%;">2025</span><span class="t" style="left:683.00px;top:358.50px;font-size:9px;line-height:12.6px;letter-spacing:-0.219px;color:#333;-webkit-text-stroke:0.05px #333;">Dec. 31</span><span class="t" style="left:687.00px;top:368.10px;font-size:9px;line-height:12.6px;letter-spacing:-0.300px;color:#333;-webkit-text-stroke:0.05px #333;transform:scaleX(0.8979);transform-origin:0 50%;">11:59p</span><span class="t" style="left:690.70px;top:377.50px;font-size:9px;line-height:12.6px;letter-spacing:-0.300px;color:#333;-webkit-text-stroke:0.05px #333;transform:scaleX(0.9824);transform-origin:0 50%;">2025</span><span class="t" style="left:160.00px;top:410.25px;font-size:9.5px;line-height:13.3px;letter-spacing:0.439px;color:#111;-webkit-text-stroke:0.3px #111;">Month</span><span class="t" style="left:157.80px;top:421.45px;font-size:9.5px;line-height:13.3px;letter-spacing:-0.041px;color:#111;-webkit-text-stroke:0.3px #111;">(2,198 Deliveries in Report)</span><span class="t" style="left:335.70px;top:414.95px;font-size:9.5px;line-height:13.3px;letter-spacing:0.170px;color:#111;-webkit-text-stroke:0.3px #111;">Date/Time</span><span class="t" style="left:428.60px;top:415.16px;font-size:10.2px;line-height:14.28px;letter-spacing:-0.300px;color:#fff;font-weight:700;transform:scaleX(0.9345);transform-origin:0 50%;">Deliveries</span><span class="t" style="left:507.90px;top:415.16px;font-size:10.2px;line-height:14.28px;letter-spacing:-0.300px;color:#fff;font-weight:700;transform:scaleX(0.9520);transform-origin:0 50%;">Recipients</span><span class="t" style="left:595.80px;top:415.16px;font-size:10.2px;line-height:14.28px;letter-spacing:-0.300px;color:#fff;font-weight:700;transform:scaleX(0.9589);transform-origin:0 50%;">Delivered</span><span class="t" style="left:675.50px;top:415.16px;font-size:10.2px;line-height:14.28px;letter-spacing:-0.300px;color:#fff;font-weight:700;transform:scaleX(0.9592);transform-origin:0 50%;">Bounced</span><span class="t" style="left:175.40px;top:445.35px;font-size:9.5px;line-height:13.3px;letter-spacing:0.054px;color:#111;-webkit-text-stroke:0.3px #111;">February 2025</span><span class="t" style="left:278.90px;top:445.35px;font-size:9.5px;line-height:13.3px;letter-spacing:-0.300px;color:#111;-webkit-text-stroke:0.3px #111;transform:scaleX(0.9980);transform-origin:0 50%;">Feb. 3, 2025 - Feb. 21, 2025</span><span class="t" style="left:463.40px;top:445.35px;font-size:9.5px;line-height:13.3px;letter-spacing:0.011px;color:#111;-webkit-text-stroke:0.3px #111;">85</span><span class="t" style="left:533.30px;top:445.35px;font-size:9.5px;line-height:13.3px;letter-spacing:-0.300px;color:#111;-webkit-text-stroke:0.3px #111;transform:scaleX(0.8767);transform-origin:0 50%;">10,261</span><span class="t" style="left:616.70px;top:445.35px;font-size:9.5px;line-height:13.3px;letter-spacing:-0.300px;color:#111;-webkit-text-stroke:0.3px #111;transform:scaleX(0.8767);transform-origin:0 50%;">10,221</span><span class="t" style="left:708.20px;top:445.35px;font-size:9.5px;line-height:13.3px;letter-spacing:0.111px;color:#111;-webkit-text-stroke:0.3px #111;">40</span><span class="t" style="left:175.40px;top:469.12px;font-size:9.5px;line-height:13.3px;letter-spacing:0.043px;color:#111;-webkit-text-stroke:0.3px #111;">March 2025</span><span class="t" style="left:277.80px;top:469.12px;font-size:9.5px;line-height:13.3px;letter-spacing:-0.231px;color:#111;-webkit-text-stroke:0.3px #111;">Mar. 3, 2025 - Mar. 31, 2025</span><span class="t" style="left:460.40px;top:469.12px;font-size:9.5px;line-height:13.3px;letter-spacing:-0.300px;color:#111;-webkit-text-stroke:0.3px #111;transform:scaleX(0.9091);transform-origin:0 50%;">108</span><span class="t" style="left:541.30px;top:469.12px;font-size:9.5px;line-height:13.3px;letter-spacing:0.014px;color:#111;-webkit-text-stroke:0.3px #111;">933</span><span class="t" style="left:626.80px;top:469.12px;font-size:9.5px;line-height:13.3px;letter-spacing:-0.300px;color:#111;-webkit-text-stroke:0.3px #111;transform:scaleX(0.9225);transform-origin:0 50%;">914</span><span class="t" style="left:710.70px;top:469.12px;font-size:9.5px;line-height:13.3px;letter-spacing:-0.300px;color:#111;-webkit-text-stroke:0.3px #111;transform:scaleX(0.8318);transform-origin:0 50%;">19</span><span class="t" style="left:175.40px;top:492.89px;font-size:9.5px;line-height:13.3px;letter-spacing:0.062px;color:#111;-webkit-text-stroke:0.3px #111;">April 2025</span><span class="t" style="left:279.90px;top:492.89px;font-size:9.5px;line-height:13.3px;letter-spacing:-0.174px;color:#111;-webkit-text-stroke:0.3px #111;">Apr. 1, 2025 - Apr. 30, 2025</span><span class="t" style="left:460.40px;top:492.89px;font-size:9.5px;line-height:13.3px;letter-spacing:-0.300px;color:#111;-webkit-text-stroke:0.3px #111;transform:scaleX(0.9091);transform-origin:0 50%;">182</span><span class="t" style="left:536.80px;top:492.89px;font-size:9.5px;line-height:13.3px;letter-spacing:-0.300px;color:#111;-webkit-text-stroke:0.3px #111;transform:scaleX(0.9156);transform-origin:0 50%;">1,927</span><span class="t" style="left:619.70px;top:492.89px;font-size:9.5px;line-height:13.3px;letter-spacing:-0.300px;color:#111;-webkit-text-stroke:0.3px #111;transform:scaleX(0.9380);transform-origin:0 50%;">1,896</span><span class="t" style="left:710.70px;top:492.89px;font-size:9.5px;line-height:13.3px;letter-spacing:-0.300px;color:#111;-webkit-text-stroke:0.3px #111;transform:scaleX(0.8318);transform-origin:0 50%;">31</span><span class="t" style="left:175.40px;top:516.66px;font-size:9.5px;line-height:13.3px;letter-spacing:-0.092px;color:#111;-webkit-text-stroke:0.3px #111;">May 2025</span><span class="t" style="left:278.90px;top:516.66px;font-size:9.5px;line-height:13.3px;letter-spacing:-0.250px;color:#111;-webkit-text-stroke:0.3px #111;">May 1, 2025 - May 29, 2025</span><span class="t" style="left:460.40px;top:516.66px;font-size:9.5px;line-height:13.3px;letter-spacing:-0.300px;color:#111;-webkit-text-stroke:0.3px #111;transform:scaleX(0.9091);transform-origin:0 50%;">153</span><span class="t" style="left:541.30px;top:516.66px;font-size:9.5px;line-height:13.3px;letter-spacing:0.014px;color:#111;-webkit-text-stroke:0.3px #111;">603</span><span class="t" style="left:624.70px;top:516.66px;font-size:9.5px;line-height:13.3px;letter-spacing:0.014px;color:#111;-webkit-text-stroke:0.3px #111;">603</span><span class="t" style="left:713.70px;top:516.66px;font-size:9.5px;line-height:13.3px;letter-spacing:0.003px;color:#111;-webkit-text-stroke:0.3px #111;">0</span><span class="t" style="left:175.40px;top:540.43px;font-size:9.5px;line-height:13.3px;letter-spacing:0.003px;color:#111;-webkit-text-stroke:0.3px #111;">June 2025</span><span class="t" style="left:276.70px;top:540.43px;font-size:9.5px;line-height:13.3px;letter-spacing:-0.154px;color:#111;-webkit-text-stroke:0.3px #111;">Jun. 3, 2025 - Jun. 30, 2025</span><span class="t" style="left:460.40px;top:540.43px;font-size:9.5px;line-height:13.3px;letter-spacing:-0.300px;color:#111;-webkit-text-stroke:0.3px #111;transform:scaleX(0.9091);transform-origin:0 50%;">165</span><span class="t" style="left:536.30px;top:540.43px;font-size:9.5px;line-height:13.3px;letter-spacing:-0.300px;color:#111;-webkit-text-stroke:0.3px #111;transform:scaleX(0.9380);transform-origin:0 50%;">3,165</span><span class="t" style="left:619.70px;top:540.43px;font-size:9.5px;line-height:13.3px;letter-spacing:-0.300px;color:#111;-webkit-text-stroke:0.3px #111;transform:scaleX(0.9380);transform-origin:0 50%;">3,123</span><span class="t" style="left:708.20px;top:540.43px;font-size:9.5px;line-height:13.3px;letter-spacing:0.111px;color:#111;-webkit-text-stroke:0.3px #111;">42</span><span class="t" style="left:175.40px;top:564.20px;font-size:9.5px;line-height:13.3px;letter-spacing:-0.041px;color:#111;-webkit-text-stroke:0.3px #111;">July 2025</span><span class="t" style="left:288.10px;top:564.20px;font-size:9.5px;line-height:13.3px;letter-spacing:-0.300px;color:#111;-webkit-text-stroke:0.3px #111;transform:scaleX(0.9906);transform-origin:0 50%;">Jul. 1, 2025 - Jul. 31, 2025</span><span class="t" style="left:460.90px;top:564.20px;font-size:9.5px;line-height:13.3px;letter-spacing:-0.300px;color:#111;-webkit-text-stroke:0.3px #111;transform:scaleX(0.8757);transform-origin:0 50%;">217</span><span class="t" style="left:541.80px;top:564.20px;font-size:9.5px;line-height:13.3px;letter-spacing:-0.153px;color:#111;-webkit-text-stroke:0.3px #111;">587</span><span class="t" style="left:625.20px;top:564.20px;font-size:9.5px;line-height:13.3px;letter-spacing:-0.153px;color:#111;-webkit-text-stroke:0.3px #111;">587</span><span class="t" style="left:713.70px;top:564.20px;font-size:9.5px;line-height:13.3px;letter-spacing:0.003px;color:#111;-webkit-text-stroke:0.3px #111;">0</span><span class="t" style="left:175.40px;top:587.97px;font-size:9.5px;line-height:13.3px;letter-spacing:0.122px;color:#111;-webkit-text-stroke:0.3px #111;">August 2025</span><span class="t" style="left:277.20px;top:587.97px;font-size:9.5px;line-height:13.3px;letter-spacing:-0.267px;color:#111;-webkit-text-stroke:0.3px #111;">Aug. 1, 2025 - Aug. 31, 2025</span><span class="t" style="left:457.70px;top:587.97px;font-size:9.5px;line-height:13.3px;letter-spacing:0.147px;color:#111;-webkit-text-stroke:0.3px #111;">244</span><span class="t" style="left:541.80px;top:587.97px;font-size:9.5px;line-height:13.3px;letter-spacing:-0.153px;color:#111;-webkit-text-stroke:0.3px #111;">575</span><span class="t" style="left:625.20px;top:587.97px;font-size:9.5px;line-height:13.3px;letter-spacing:-0.153px;color:#111;-webkit-text-stroke:0.3px #111;">575</span><span class="t" style="left:713.70px;top:587.97px;font-size:9.5px;line-height:13.3px;letter-spacing:0.003px;color:#111;-webkit-text-stroke:0.3px #111;">0</span><span class="t" style="left:175.40px;top:611.74px;font-size:9.5px;line-height:13.3px;letter-spacing:0.132px;color:#111;-webkit-text-stroke:0.3px #111;">September 2025</span><span class="t" style="left:277.90px;top:611.74px;font-size:9.5px;line-height:13.3px;letter-spacing:-0.300px;color:#111;-webkit-text-stroke:0.3px #111;transform:scaleX(0.9975);transform-origin:0 50%;">Sep. 1, 2025 - Sep. 30, 2025</span><span class="t" style="left:458.10px;top:611.74px;font-size:9.5px;line-height:13.3px;letter-spacing:0.014px;color:#111;-webkit-text-stroke:0.3px #111;">285</span><span class="t" style="left:534.00px;top:611.74px;font-size:9.5px;line-height:13.3px;letter-spacing:-0.116px;color:#111;-webkit-text-stroke:0.3px #111;">2,082</span><span class="t" style="left:617.40px;top:611.74px;font-size:9.5px;line-height:13.3px;letter-spacing:-0.116px;color:#111;-webkit-text-stroke:0.3px #111;">2,052</span><span class="t" style="left:708.40px;top:611.74px;font-size:9.5px;line-height:13.3px;letter-spacing:0.011px;color:#111;-webkit-text-stroke:0.3px #111;">30</span><span class="t" style="left:175.40px;top:635.51px;font-size:9.5px;line-height:13.3px;letter-spacing:0.102px;color:#111;-webkit-text-stroke:0.3px #111;">October 2025</span><span class="t" style="left:281.60px;top:635.51px;font-size:9.5px;line-height:13.3px;letter-spacing:-0.291px;color:#111;-webkit-text-stroke:0.3px #111;">Oct. 1, 2025 - Oct. 31, 2025</span><span class="t" style="left:458.60px;top:635.51px;font-size:9.5px;line-height:13.3px;letter-spacing:-0.153px;color:#111;-webkit-text-stroke:0.3px #111;">257</span><span class="t" style="left:534.00px;top:635.51px;font-size:9.5px;line-height:13.3px;letter-spacing:-0.116px;color:#111;-webkit-text-stroke:0.3px #111;">2,029</span><span class="t" style="left:617.40px;top:635.51px;font-size:9.5px;line-height:13.3px;letter-spacing:-0.116px;color:#111;-webkit-text-stroke:0.3px #111;">2,002</span><span class="t" style="left:708.90px;top:635.51px;font-size:9.5px;line-height:13.3px;letter-spacing:-0.239px;color:#111;-webkit-text-stroke:0.3px #111;">27</span><span class="t" style="left:175.40px;top:659.28px;font-size:9.5px;line-height:13.3px;letter-spacing:0.138px;color:#111;-webkit-text-stroke:0.3px #111;">November 2025</span><span class="t" style="left:275.50px;top:659.28px;font-size:9.5px;line-height:13.3px;letter-spacing:-0.174px;color:#111;-webkit-text-stroke:0.3px #111;">Nov. 2, 2025 - Nov. 28, 2025</span><span class="t" style="left:458.10px;top:659.28px;font-size:9.5px;line-height:13.3px;letter-spacing:0.014px;color:#111;-webkit-text-stroke:0.3px #111;">220</span><span class="t" style="left:538.60px;top:659.28px;font-size:9.5px;line-height:13.3px;letter-spacing:-0.300px;color:#111;-webkit-text-stroke:0.3px #111;transform:scaleX(0.8348);transform-origin:0 50%;">1,150</span><span class="t" style="left:622.00px;top:659.28px;font-size:9.5px;line-height:13.3px;letter-spacing:-0.300px;color:#111;-webkit-text-stroke:0.3px #111;transform:scaleX(0.8348);transform-origin:0 50%;">1,133</span><span class="t" style="left:711.20px;top:659.28px;font-size:9.5px;line-height:13.3px;letter-spacing:-0.300px;color:#111;-webkit-text-stroke:0.3px #111;transform:scaleX(0.7817);transform-origin:0 50%;">17</span><span class="t" style="left:175.40px;top:683.05px;font-size:9.5px;line-height:13.3px;letter-spacing:0.169px;color:#111;-webkit-text-stroke:0.3px #111;">December 2025</span><span class="t" style="left:278.20px;top:683.05px;font-size:9.5px;line-height:13.3px;letter-spacing:-0.300px;color:#111;-webkit-text-stroke:0.3px #111;transform:scaleX(0.9950);transform-origin:0 50%;">Dec. 1, 2025 - Dec. 31, 2025</span><span class="t" style="left:458.10px;top:683.05px;font-size:9.5px;line-height:13.3px;letter-spacing:0.014px;color:#111;-webkit-text-stroke:0.3px #111;">282</span><span class="t" style="left:533.80px;top:683.05px;font-size:9.5px;line-height:13.3px;letter-spacing:-0.076px;color:#111;-webkit-text-stroke:0.3px #111;">2,604</span><span class="t" style="left:617.40px;top:683.05px;font-size:9.5px;line-height:13.3px;letter-spacing:-0.116px;color:#111;-webkit-text-stroke:0.3px #111;">2,583</span><span class="t" style="left:710.70px;top:683.05px;font-size:9.5px;line-height:13.3px;letter-spacing:-0.300px;color:#111;-webkit-text-stroke:0.3px #111;transform:scaleX(0.8318);transform-origin:0 50%;">21</span>

</body></html>
